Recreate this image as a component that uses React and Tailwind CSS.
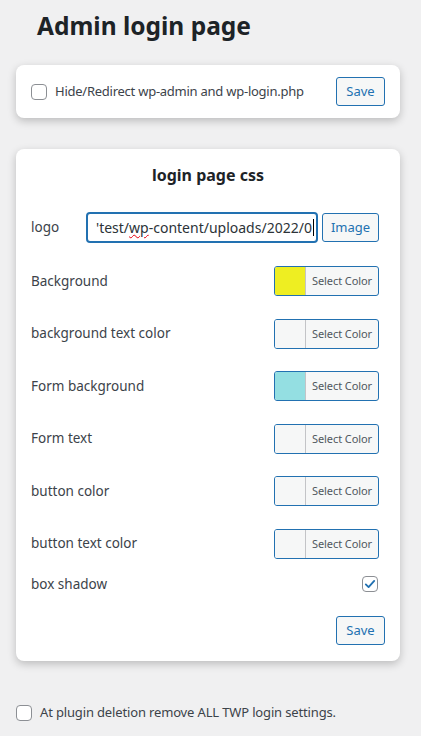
import { useState } from 'react';

const FONT = { fontFamily: '"Noto Sans", "Open Sans", sans-serif' };

function Checkbox({ checked, onChange }) {
  return (
    <button
      type="button"
      onClick={() => onChange(!checked)}
      className="w-4 h-4 shrink-0 rounded-[4px] border border-[#8c8f94] bg-white flex items-center justify-center"
    >
      {checked && (
        <svg viewBox="0 0 20 20" className="w-[14px] h-[14px]">
          <path d="M4 10.5l4 4 8-9" fill="none" stroke="#2271b1" strokeWidth="2.6" strokeLinecap="round" strokeLinejoin="round" />
        </svg>
      )}
    </button>
  );
}

function SaveButton() {
  return (
    <button className="h-[29px] w-[49px] rounded-[3px] border border-[#2271b1] bg-[#f6f7f7] text-[13px] text-[#2271b1]">
      Save
    </button>
  );
}

function ColorPicker({ color }) {
  return (
    <button className="flex h-[30px] w-[105px] overflow-hidden rounded-[3px] border border-[#2271b1] bg-[#f6f7f7]">
      <span className="h-full w-[31px] border-r border-[#c3c4c7]" style={{ background: color }} />
      <span className="flex-1 text-[11px] tracking-[-0.1px] leading-[28px] text-[#50575e] text-center">Select Color</span>
    </button>
  );
}

const colorRows = [
  { label: 'Background', color: '#eeee22' },
  { label: 'background text color', color: '#f6f7f7' },
  { label: 'Form background', color: '#94dfe2' },
  { label: 'Form text', color: '#f6f7f7' },
  { label: 'button color', color: '#f6f7f7' },
  { label: 'button text color', color: '#f6f7f7' },
];

export default function App() {
  const [hide, setHide] = useState(false);
  const [shadow, setShadow] = useState(true);
  const [removeAll, setRemoveAll] = useState(false);

  return (
    <div className="min-h-screen bg-[#f0f0f1] pb-4 text-[#3c434a]" style={FONT}>
      <h1 className="pl-[37px] pt-[8px] text-[24.5px] font-bold leading-[36px] text-[#1d2327]">Admin login page</h1>

      {/* Hide/redirect card */}
      <div className="ml-4 mr-[21px] mt-[21px] flex h-[53px] items-center rounded-lg bg-white pl-[15px] pr-[15px] shadow-[0_3px_8px_rgba(0,0,0,0.22)]">
        <Checkbox checked={hide} onChange={setHide} />
        <span className="ml-2 flex-1 text-[13px] tracking-[-0.25px]">Hide/Redirect wp-admin and wp-login.php</span>
        <SaveButton />
      </div>

      {/* login page css card */}
      <div className="ml-4 mr-[21px] mt-[31px] rounded-lg bg-white px-[15px] pb-[16px] pt-[14px] shadow-[0_3px_8px_rgba(0,0,0,0.22)]">
        <div className="text-center text-[16px] font-bold leading-[24px] text-[#1d2327]">login page css</div>

        <div className="mt-[25px] flex items-center">
          <span className="w-[55px] text-[13.5px]">logo</span>
          <div className="flex h-[31px] w-[232px] items-center overflow-hidden rounded-[4px] border-2 border-[#2271b1] pl-[8px] text-[14px] text-[#2c3338] whitespace-nowrap">
            <span>'test/</span>
            <span className="underline decoration-wavy decoration-red-600 decoration-1">wp</span>
            <span>-content/uploads/2022/0</span>
            <span className="ml-px h-[17px] w-px bg-black" />
          </div>
          <button className="ml-[4px] h-[29px] w-[57px] rounded-[3px] border border-[#2271b1] bg-[#f6f7f7] text-[13px] text-[#2271b1]">
            Image
          </button>
        </div>

        <div className="mt-[23px] flex flex-col gap-[22.5px]">
          {colorRows.map((r) => (
            <div key={r.label} className="flex items-center justify-between pr-[6px]">
              <span className="text-[13.5px]">{r.label}</span>
              <ColorPicker color={r.color} />
            </div>
          ))}
        </div>

        <div className="mt-[15px] flex items-center justify-between pr-[7px]">
          <span className="text-[13.5px]">box shadow</span>
          <Checkbox checked={shadow} onChange={setShadow} />
        </div>

        <div className="mt-[22px] flex justify-end">
          <SaveButton />
        </div>
      </div>

      <div className="mt-[42px] flex items-center pl-4">
        <Checkbox checked={removeAll} onChange={setRemoveAll} />
        <span className="ml-2 text-[13px] tracking-[-0.15px]">At plugin deletion remove ALL TWP login settings.</span>
      </div>
    </div>
  );
}
